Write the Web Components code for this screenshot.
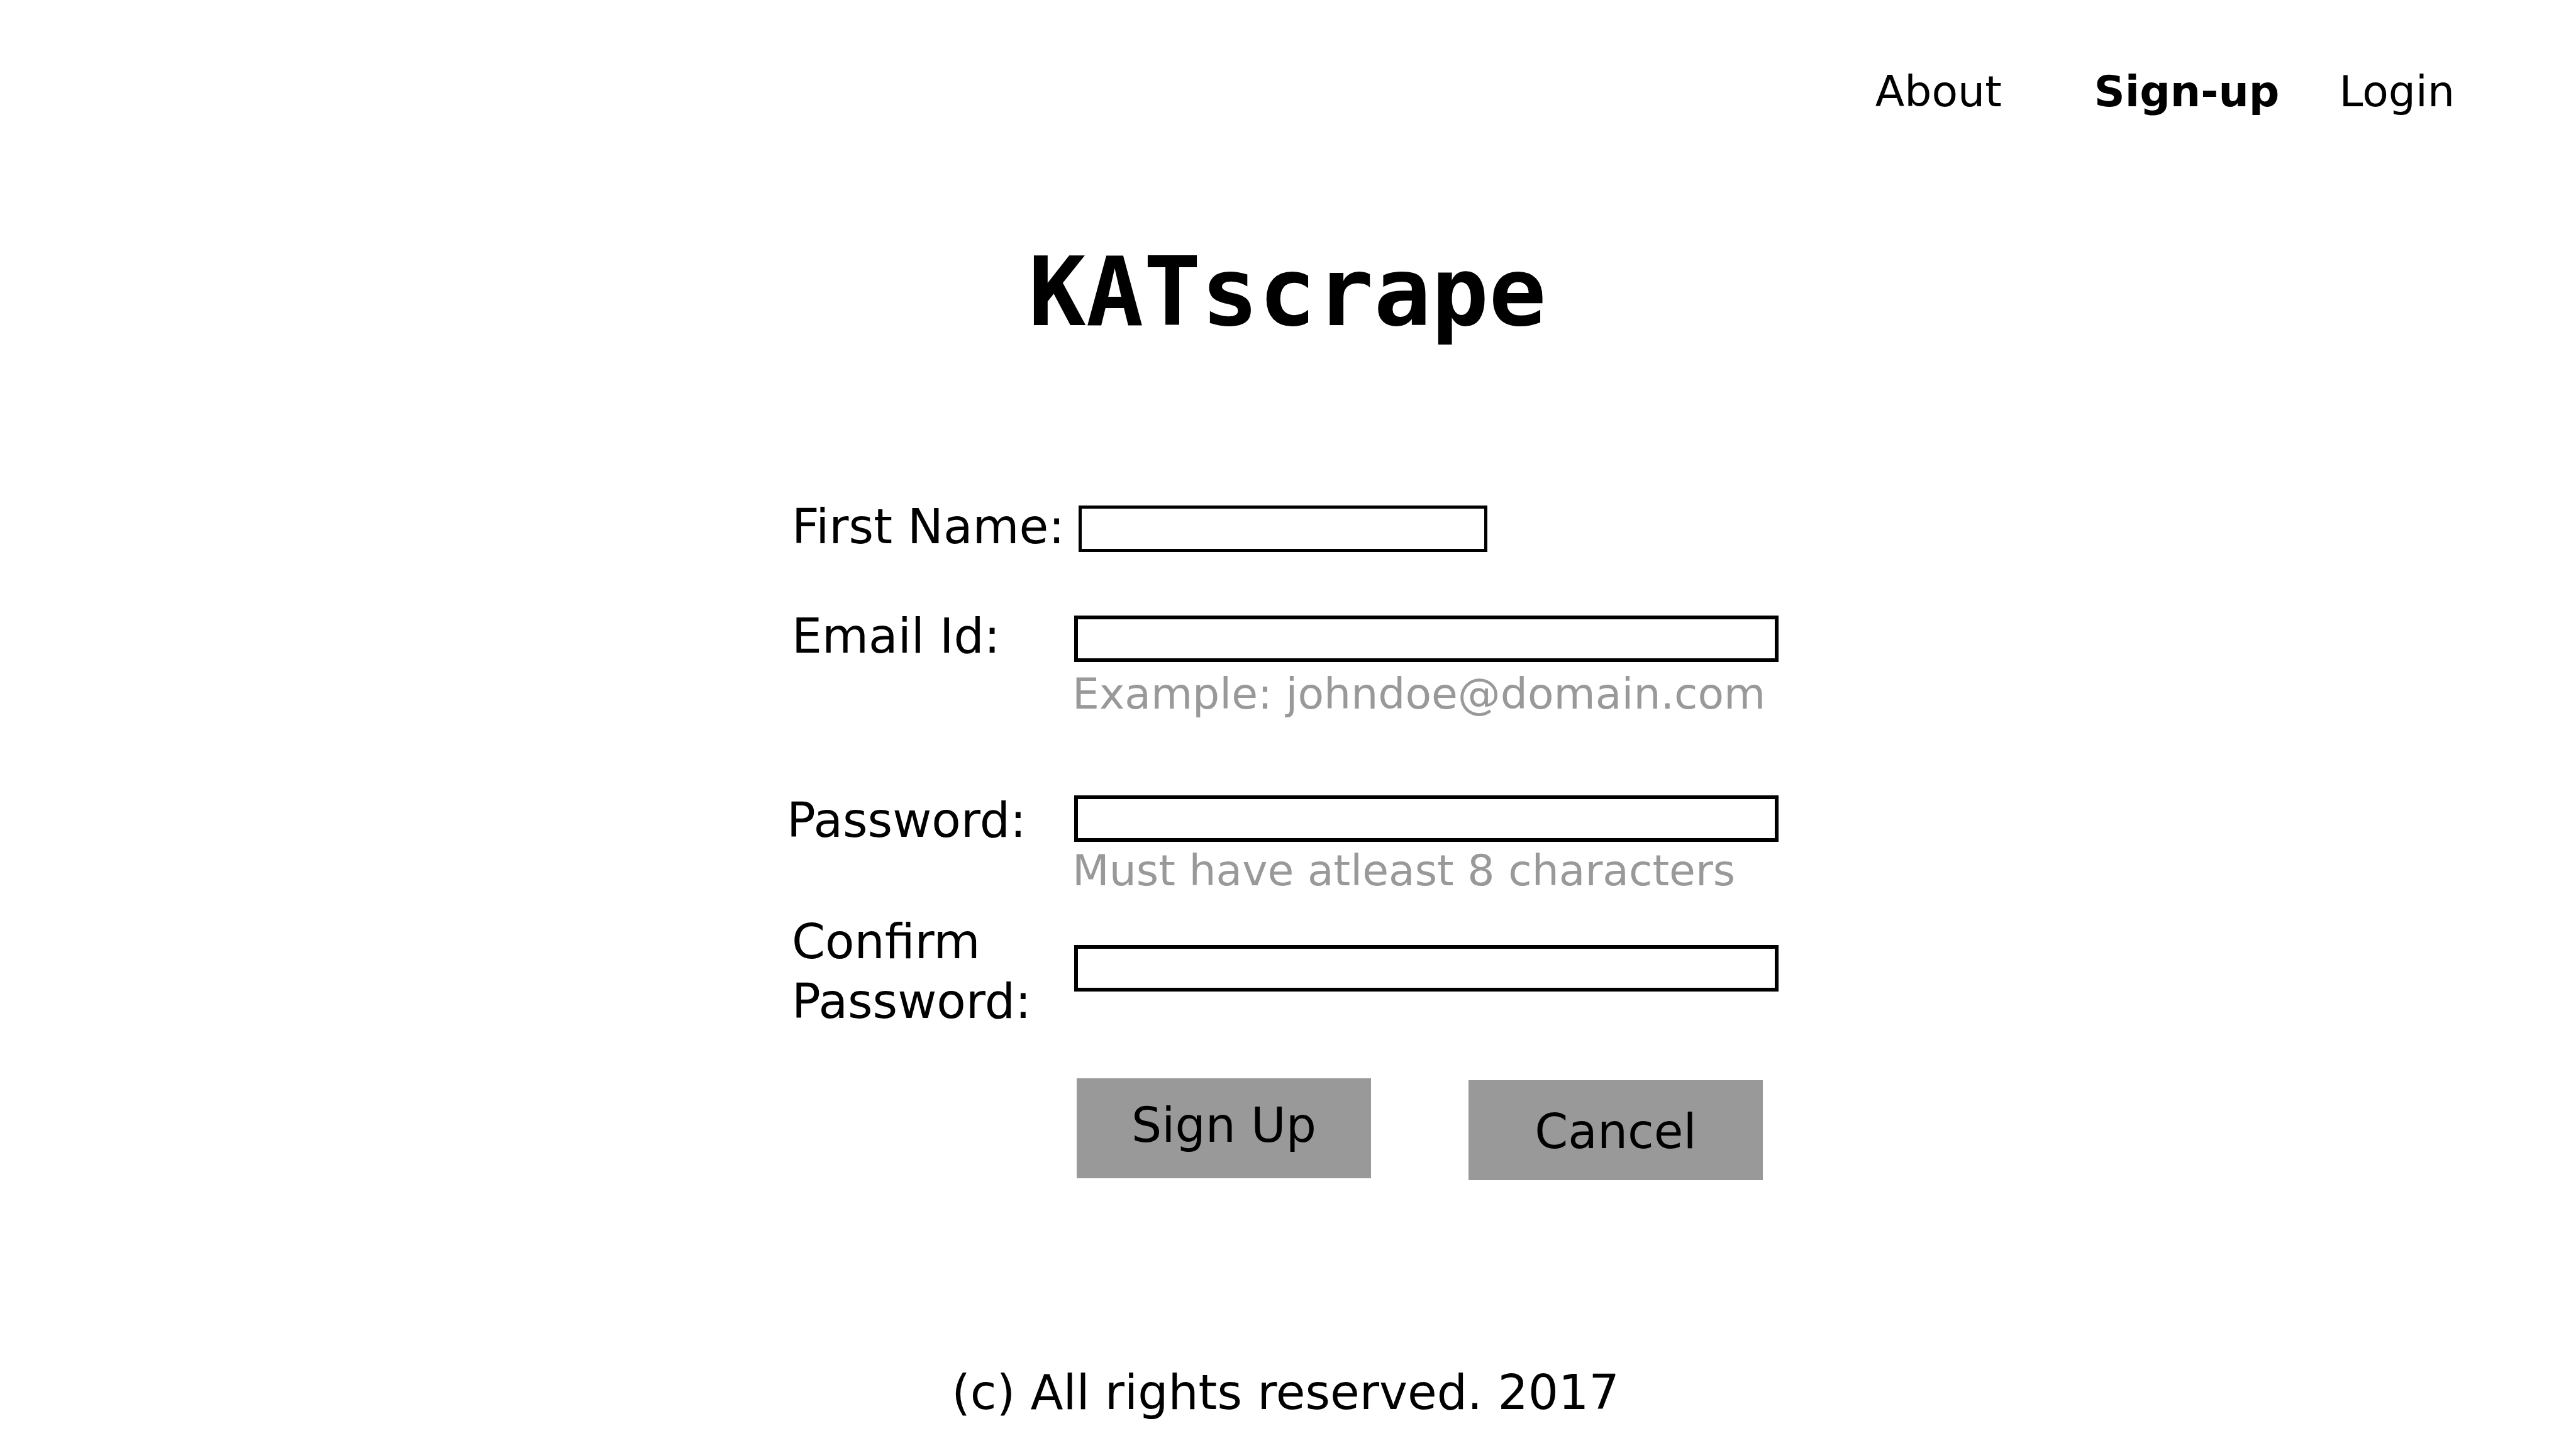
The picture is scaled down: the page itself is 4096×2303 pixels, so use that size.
<!DOCTYPE html>
<html lang="en">
<head>
<meta charset="utf-8">
<title>KATscrape - Sign-up</title>
<style>
  body {
    margin: 0;
    background: #fff;
    color: #000;
    font-family: "DejaVu Sans", sans-serif;
    font-size: 76px;
    line-height: 95px;
  }
</style>
</head>
<body>
<signup-page></signup-page>

<template id="nav-link-template">
  <style>
    :host { display: block; }
    a { color: inherit; text-decoration: none; }
    :host([current]) a { font-weight: bold; }
  </style>
  <a href="#"><slot></slot></a>
</template>

<template id="site-nav-template">
  <style>
    :host { display: block; font-size: 68px; line-height: 79px; }
    nav { display: flex; justify-content: flex-end; gap: 95px; padding: 106px 193px 0 0; }
    .lead { margin-right: 52px; }
  </style>
  <nav>
    <nav-link class="lead">About</nav-link>
    <nav-link current>Sign-up</nav-link>
    <nav-link>Login</nav-link>
  </nav>
</template>

<template id="form-field-template">
  <style>
    :host { display: grid; grid-template-columns: 455px 1fr; align-items: start; }
    label { padding-left: 9px; white-space: nowrap; }
    :host([outdent]) label { padding-left: 1px; }
    :host([wrap]) label { white-space: normal; }
    input {
      display: block;
      box-sizing: border-box;
      width: 1120px;
      height: 74px;
      margin: var(--input-top, 14px) 0 0 3px;
      padding: 0 16px;
      border: 6px solid #000;
      border-radius: 0;
      background: #fff;
      font: inherit;
      font-size: 48px;
      line-height: 56px;
      outline: none;
    }
    :host([short]) input { width: 650px; margin-left: 10px; border-width: 5px; }
    .hint { color: #999; font-size: 68px; line-height: 79px; white-space: nowrap; margin-top: var(--hint-gap, 11px); }
    .hint:empty { display: none; }
  </style>
  <label for="control"><slot></slot></label>
  <div><input id="control" aria-describedby="hint"><div class="hint" id="hint"></div></div>
</template>

<template id="form-button-template">
  <style>
    :host { display: block; }
    button {
      display: block;
      box-sizing: border-box;
      width: 468px;
      height: 159px;
      padding: var(--button-padding, 0);
      border: 0;
      border-radius: 0;
      background: #999;
      color: #000;
      font: inherit;
    }
  </style>
  <button type="button"><slot></slot></button>
</template>

<template id="signup-page-template">
  <style>
    :host { display: flex; flex-direction: column; min-height: 100vh; }
    h1 {
      margin: 191px 0 0;
      padding-right: 2px;
      text-align: center;
      font: bold 152px/177px "DejaVu Sans Mono", monospace;
    }
    form { width: 1596px; margin: 237px auto 0; }
    .email { margin-top: 79px; --input-top: 15px; }
    .password { margin-top: 114px; --input-top: 8px; --hint-gap: 6px; }
    .confirm { margin-top: 26px; --input-top: 53px; }
    .actions { display: flex; align-items: flex-start; gap: 155px; margin-top: 75px; padding-left: 462px; }
    .submit { --button-padding: 0 0 10px; }
    .cancel { margin-top: 3px; --button-padding: 4px 0 0; }
    footer { margin-top: auto; padding: 0 8px 41px 0; text-align: center; }
  </style>
  <site-nav></site-nav>
  <h1>KATscrape</h1>
  <form>
    <form-field short>First Name:</form-field>
    <form-field class="email" type="email" hint="Example: johndoe@domain.com">Email Id:</form-field>
    <form-field class="password" outdent type="password" hint="Must have atleast 8 characters">Password:</form-field>
    <form-field class="confirm" wrap type="password">Confirm Password:</form-field>
    <div class="actions">
      <form-button class="submit">Sign Up</form-button>
      <form-button class="cancel">Cancel</form-button>
    </div>
  </form>
  <footer>(c) All rights reserved. 2017</footer>
</template>

<script>
  class TemplateElement extends HTMLElement {
    constructor() {
      super();
      const template = document.getElementById(this.localName + "-template");
      this.attachShadow({ mode: "open" }).append(document.importNode(template.content, true));
    }
  }

  class NavLink extends TemplateElement {}
  class SiteNav extends TemplateElement {}
  class FormButton extends TemplateElement {}
  class SignupPage extends TemplateElement {}

  class FormField extends TemplateElement {
    connectedCallback() {
      this.shadowRoot.querySelector("input").type = this.getAttribute("type") || "text";
      this.shadowRoot.querySelector(".hint").textContent = this.getAttribute("hint") || "";
    }
  }

  customElements.define("nav-link", NavLink);
  customElements.define("site-nav", SiteNav);
  customElements.define("form-field", FormField);
  customElements.define("form-button", FormButton);
  customElements.define("signup-page", SignupPage);
</script>
</body>
</html>
